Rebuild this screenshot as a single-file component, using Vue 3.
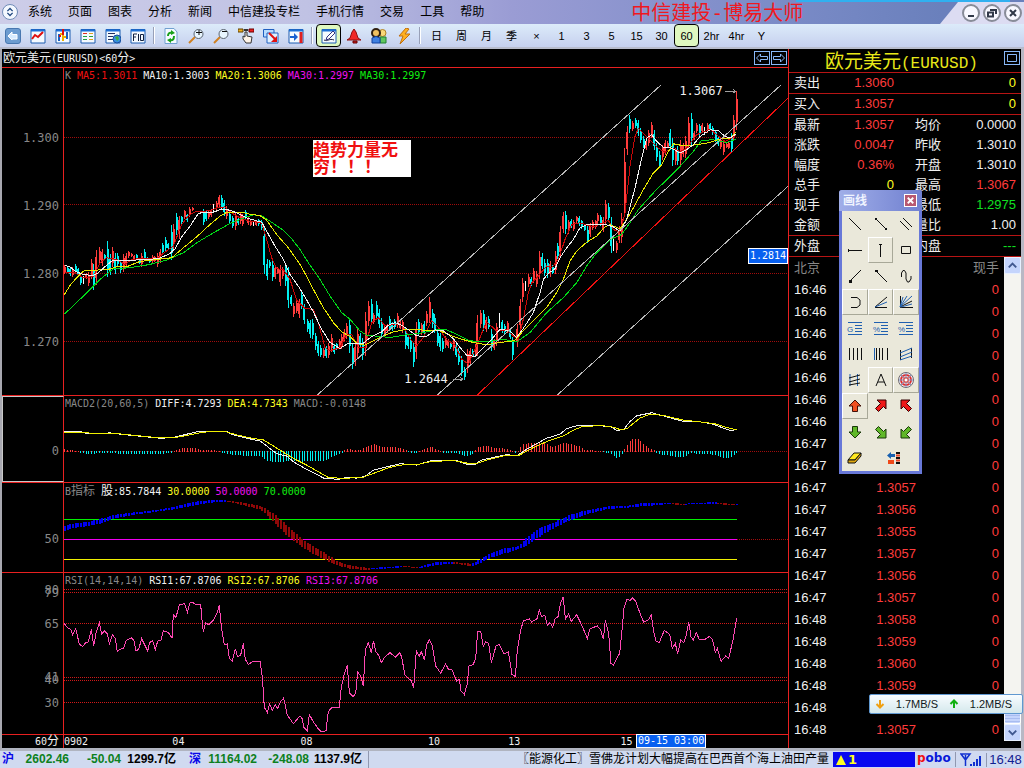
<script setup>
const menus = ['系统', '页面', '图表', '分析', '新闻', '中信建投专栏', '手机行情', '交易', '工具', '帮助']

// Shapes are [path, stroke, fill, stroke width]
const K = '#101010'
const B = '#2060b0'
const N = 'none'
const win = [['M1 1.500H15V15H1Z', '#1c5cb0', '#f4faff', 1], ['M1 2.500H15', '#1c70d8', N, 2]]
const tools = [
  [
    { n: '后退', s: [['M3 .5H13Q15.500 .5 15.500 3V13Q15.500 15.500 13 15.500H3Q.5 15.500 .5 13V3Q.5 .5 3 .5Z', '#4878b0', '#6c9cd0', 1], ['M3 8L7 4V6.500H12V11H7V12Z', '#fff', '#d8ecff', 1]] },
    { n: '分时', s: [...win, ['M2 11L5 7L8 9L13 4', '#e01010', N, 2]] },
    { n: 'K线', s: [...win, ['M4 6V13M12 4V11', '#1c60c0', N, 2], ['M8 1V7M4 8H6', '#e01010', N, 2], ['M8 7V13M10 8V10M6 5V7', '#f0b000', N, 2]] },
    { n: '报价', s: [...win, ['M3 5.500H7', '#e03020', N, 1], ['M3 8.500H7M3 11.500H7', '#20a040', N, 1], ['M9 5.500H13M9 11.500H13', '#e0a020', N, 1], ['M9 8.500H13', '#20a040', N, 1]] },
    { n: '资讯', s: [...win, ['M3 5.500H10M3 8.500H8M3 11.500H8', '#203060', N, 1], ['M8 11A4 4 0 1 1 16 11A4 4 0 1 1 8 11Z', '#1850a0', '#3890e0', 1], ['M10 9L13 8L14 11L12 13Z', N, '#40b040', 0]] },
    { n: 'F10', s: [...win, ['M3.500 13V6H7M3.500 9H6M8.500 13V6M10.500 6.500H13.500V12.500H10.500Z', '#102040', N, 1]] },
  ],
  [
    { n: '刷新', s: [['M2 .5H11L14 4V15.500H2Z', '#70a0d0', '#f4faff', 1], ['M5 8Q5 4 9 5M11 8Q11 13 7 12', '#18a018', N, 2], ['M8 2L12 5L8 7ZM8 10L4 12L8 15Z', N, '#18a018', 0]] },
    { n: '放大', s: [['M1 15L7 9', '#d08020', N, 2], ['M6 6A4.500 4.500 0 1 1 15 6A4.500 4.500 0 1 1 6 6Z', '#5a6470', '#e8f6ff', 1], ['M8 4.500H14M11 2V7', K, N, 1]] },
    { n: '缩小', s: [['M1 15L7 9', '#d08020', N, 2], ['M6 6A4.500 4.500 0 1 1 15 6A4.500 4.500 0 1 1 6 6Z', '#5a6470', '#e8f6ff', 1], ['M9 3.500H14', K, N, 1]] },
    { n: '移动', s: [['M0 1H5V4H0Z', '#604000', '#f0b020', 1], ['M11 1H16V4H11Z', '#600', '#f02020', 1], ['M6 2H10', '#333', N, 2], ['M7 4V9L5 8V11L8 15H13L14 9L9 8V4Z', '#333', '#fff4e8', 1]] },
    { n: '叠加', s: [['M.5 1.500H11V9H.5Z', '#2060c0', '#b8dcff', 1], ['M4 5H15V15H4Z', '#2060c0', '#e0f0ff', 1], ['M6 5L13 12', '#e01010', N, 2], ['M14 8V14H8Z', N, '#e01010', 0]] },
    { n: '区间', s: [...win, ['M2 9H8', '#1860d0', N, 2], ['M6 5L10 9L6 13Z', N, '#1860d0', 0], ['M13 4V15', '#e02020', N, 3]] },
  ],
  [
    { n: '画线', on: true, s: [...win, ['M3 12C7 14 8 10 13 12', '#202040', N, 1], ['M5 12L6 9L12 3L14 5L8 11Z', '#303080', '#fff', 1]] },
    { n: '预警', s: [['M8 1L10 4L12 10L15 12H1L4 10L6 4Z', '#901010', '#f02828', 1], ['M7 13H11V15H7Z', '#600', '#d02020', 1]] },
    { n: '用户', s: [['M8 5A3.500 3.500 0 1 1 15 5A3.500 3.500 0 1 1 8 5Z', '#b08020', '#f8d878', 1], ['M9 9H15V15H9Z', '#208030', '#60c860', 1], ['M1 5A3.500 3.500 0 1 1 9 5A3.500 3.500 0 1 1 1 5Z', '#302010', '#f0c060', 2], ['M1 10Q5 7 9 10V15H1Z', '#1040a0', '#4080e0', 1]] },
    { n: '闪电', s: [['M10 0L3 8H7L4 16L14 6H9L13 1Z', '#c07010', '#ffb020', 1]] },
  ],
]
const periods = ['日', '周', '月', '季', '×', '1', '3', '5', '15', '30', '60', '2hr', '4hr', 'Y']

const arrowUp = 'M13 7L19 13H15.500V18.500H10.500V13H7Z'
const arrowNE = 'M9 7H18V16L15.500 13.500L10.500 18.500L7.500 15.500L12.500 10.500Z'
const arrowNW = 'M17 7H8V16L10.500 13.500L15.500 18.500L18.500 15.500L13.500 10.500Z'
const arrowDown = 'M13 19L19 13H15.500V7.500H10.500V13H7Z'
const arrowSE = 'M9 19H18V10L15.500 12.500L10.500 7.500L7.500 10.500L12.500 15.500Z'
const arrowSW = 'M17 19H8V10L10.500 12.500L15.500 7.500L18.500 10.500L13.500 15.500Z'
const ratio = [['M6 7.500H20M13 10.500H20M13 13.500H20M13 16.500H20M6 19.500H20', B, N, 1]]
const palette = [
  { n: '直线', s: [['M7 7L19 19', K, N, 1]] },
  { n: '线段', s: [['M8 8L18 18', K, N, 1], ['M7 7H9V9H7ZM17 17H19V19H17Z', N, K, 0]] },
  { n: '平行线', s: [['M7 10L16 19M10 7L19 16', K, N, 1]] },
  { n: '水平线', s: [['M6 13.500H20M6.500 12V15', K, N, 1]] },
  { n: '垂直线', up: true, s: [['M12.500 7V20M11 7.500H14', K, N, 1]] },
  { n: '矩形', s: [['M8.500 9.500H17.500V16.500H8.500Z', K, N, 1]] },
  { n: '上射线', s: [['M8 18L19 7', K, N, 1], ['M7 17H10V20H7Z', N, K, 0]] },
  { n: '下射线', s: [['M8 8L19 19', K, N, 1], ['M7 7H10V9H7Z', N, K, 0]] },
  { n: '正弦线', s: [['M8.500 14V10L10 7.500H11.500L13 10V16L14.500 19H16L18 16V13', K, N, 1]] },
  { n: '弧线', up: true, s: [['M9 8.500H15L18 11V16L15 18.500H9', K, N, 1]] },
  { n: '角度线', up: true, s: [['M7 18.500H19M7 18L19 8', K, N, 1], ['M7 18L19 13', B, N, 1]] },
  { n: '扇形线', up: true, s: [['M7.500 7V18.500H20M7 18L19 12', K, N, 1], ['M7 18L10 8M7 18L14 7M7 18L19 7M8 18L19 15', B, N, 1]] },
  { n: '黄金分割', t: 'G', s: ratio },
  { n: '百分比线', t: '%', s: ratio },
  { n: '波段线', t: '%', s: ratio },
  { n: '周期线', s: [['M7.500 7V19M11.500 7V19M15.500 7V19M19.500 7V19', K, N, 1]] },
  { n: '时间线', s: [['M6.500 7V19', B, N, 1], ['M8.500 7V19M11.500 7V19M14.500 7V19M19.500 7V19', K, N, 1]] },
  { n: '通道线', s: [['M7.500 9V19M18.500 7V17', K, N, 1], ['M7 12L19 7M7 16L19 11M7 19L19 15', B, N, 1]] },
  { n: '回归线', s: [['M8 7V19M15.500 7V19', B, N, 1], ['M7 11L18 8M7 15L18 12M7 18L18 16', K, N, 1]] },
  { n: '文字', up: true, s: [['M8 19L13 7L18 19M10 15H16', K, N, 1]] },
  { n: '轮盘', up: true, s: [['M5.500 13A7.500 7.500 0 1 1 20.500 13A7.500 7.500 0 1 1 5.500 13Z', '#706870', '#e8f0f8', 1], ['M8 13A5 5 0 1 1 18 13A5 5 0 1 1 8 13Z', '#e03030', '#f8dede', 2], ['M6 13H20M13 6V20M8 8L18 18M18 8L8 18', '#8098c8', N, 1], ['M11 11H15V15H11Z', '#c02020', '#fff', 1]] },
  { n: '红箭头', up: true, s: [[arrowUp, '#401008', '#f05020', 1]] },
  { n: '右上箭头', s: [[arrowNE, '#300', '#f01818', 1]] },
  { n: '左上箭头', s: [[arrowNW, '#300', '#f01818', 1]] },
  { n: '绿箭头', s: [[arrowDown, '#183808', '#60b828', 1]] },
  { n: '右下箭头', s: [[arrowSE, '#183808', '#60b828', 1]] },
  { n: '左下箭头', s: [[arrowSW, '#183808', '#60b828', 1]] },
  { n: '擦除', s: [['M6 15L12 8H19L13 15Z', K, '#ffe820', 1], ['M6 15V18H13L19 11V8L13 15Z', K, '#e0a810', 1]] },
  { n: '全部删除', wide: true, s: [['M7 10.500L11 7V9H15V12H11V14Z', N, '#1860b0', 0], ['M8 15H14V19H8Z', N, '#f04818', 0], ['M16 7H20V9H16ZM16 12H20V14H16ZM16 17H20V19H16Z', N, K, 0], ['M16 9.500H20V11.500H16ZM16 14.500H20V16.500H16Z', N, '#e84020', 0]] },
]

// Price pane: candles as colour, x, high, low; each block has its own origin
const candleBlocks = [
  [150, 540, 'r44 258 285 c52 262 282 c60 265 290 r68 262 292 c76 255 282 c84 265 290 c92 283 318 w100 290 315 r108 282 300 r116 278 320 r124 240 300 c130 255 332 r138 213 318 r148 204 250 r156 208 260 c164 225 240 c172 186 292 c180 225 288 r187 204 262 c195 222 285 c203 220 262 c212 245 280 r220 225 278 r228 222 265 r236 214 235 r244 220 232 r252 228 240 c260 225 240 c268 235 255 r275 222 262 c283 210 242 c291 232 246 c299 238 250 r307 228 250 r314 230 248 r322 220 262 r330 210 250 c338 190 225 c346 173 215 c354 190 210 c364 135 242 r371 132 210 c379 99 165 r387 108 178 c395 108 132 r403 90 118 c411 102 128 r419 83 112 r428 82 94 c460 88 137 c468 92 124 r475 92 118 r483 88 112 w491 72 96 r499 63 92 r507 45 82 c514 45 90 c522 60 108 r530 80 118 c538 98 132 c547 108 146 r556 100 150 c564 115 135 r571 98 132 r578 102 140 c586 90 120 r594 112 135 r602 120 140 w610 125 138 r618 122 140 c626 118 138 c634 122 150 c642 140 285 c651 240 303 c659 243 265 c667 246 305 r675 258 300 r683 262 284 r690 258 320 r698 262 298 c706 250 320 c714 262 386 c723 346 380 r731 370 414 r739 362 402 r747 358 416'],
  [840, 840, 'c65 38 88 c72 75 135 c82 118 158 c90 122 175 c98 120 178 c106 160 212 c114 185 230 c122 198 235 r130 205 238 c138 200 238 r146 190 236 r154 165 218 c162 195 225 c170 190 212 r178 180 210 r184 165 208 r192 150 186 r200 130 180 c208 115 222 c217 190 270 r225 190 260 r232 145 240 c240 160 205 c248 175 242 r256 98 232 r265 66 140 c274 60 135 r281 100 135 c289 66 120 c297 90 145 c305 115 175 r313 140 168 r321 135 162 c329 110 155 c336 128 155 c344 118 148 r352 102 145 r360 125 150 r368 122 160 c376 145 210 c384 165 208 c392 172 220 c400 190 263 r408 128 240 c416 118 170 r424 130 168 c432 125 168 r440 95 140 r448 54 130 c457 90 145 c464 105 160 c472 150 200 c480 160 215 c488 175 220 r496 170 205 r504 180 205 c512 188 208 r520 178 215 c528 195 235 c536 205 258 c544 232 290 c553 265 302 r562 210 282 r570 205 255 c578 210 235 r586 195 235 r591 108 230 r602 92 145 c610 92 155 r618 112 158 c626 110 150 c634 150 216 r642 180 212 r650 130 200 w658 100 145 c666 122 160 c674 135 165 r682 125 162 c690 150 180 c698 172 243'],
  [1440, 240, 'r111 735 803 r120 660 755 r128 595 668 w136 605 635 r145 585 622 c153 592 620 r161 565 612 r170 575 622 r178 516 600 c186 522 570 c194 540 590 c202 540 596 r210 545 592 c218 558 585 r226 515 585 c232 490 540 r240 438 536 r249 398 460 c256 394 462 r265 420 462 c273 418 445 r281 420 455 r289 408 430 c297 410 438 c305 420 448 c313 432 455 c322 440 492 r330 430 472 r338 422 452 r346 420 448 r353 400 432 c361 405 438 r369 412 456 r377 360 432 c385 370 425 c393 412 522 w401 465 515 r409 485 520 r417 440 492 r425 400 490 r433 205 410 r441 140 225 c449 105 160 r457 122 155 c466 114 145 c474 120 170 c482 145 190 c490 170 205 r498 182 210 r506 150 200 r515 125 175 c522 150 210 c529 190 243 c539 215 266 r547 195 240 r555 180 225 r563 185 205 c570 148 212 c578 175 258 r586 205 255 c593 200 255 r601 180 255 r609 190 232 r617 170 235 r625 110 208 c634 98 195 r642 155 180 r650 128 160 c658 132 168 r666 128 160 w674 142 165 r682 130 160 c690 128 152 c698 138 165 c706 150 188 c714 170 200 r722 175 208 r731 185 225 r739 190 205 r746 185 208 c754 160 218 r761 105 180 r769 33 150'],
]
const candlePaths = { r: ['', ''], c: ['', ''], w: ['', ''] }
for (const [ox, oy, text] of candleBlocks) {
  for (const m of text.matchAll(/([rcw])(\d+) (\d+) (\d+)/g)) {
    const x = ox + +m[2]
    const hi = oy + +m[3]
    const lo = oy + +m[4]
    const pad = (lo - hi) * 0.2
    candlePaths[m[1]][0] += `M${x} ${hi}V${lo}`
    if (m[1] !== 'w') candlePaths[m[1]][1] += `M${x + 1} ${hi + pad}V${lo - pad}`
  }
}

const join = (...blocks) => 'M' + blocks.map(([ox, oy, text]) =>
  text.split(' ').map(p => { const [x, y] = p.split(','); return `${ox + +x} ${oy + +y}` }).join('L')).join('L')
const maLines = [
  { c: '#c80808', d: join([150, 540, '44,278 75,280 100,295 130,292 150,250 170,235 200,240 225,255 245,240 290,236 320,238 345,218 370,200 395,135 415,108 440,95 480,94 500,85 525,82 545,100 570,115 600,125 635,130 650,180 665,235 680,268 700,270 720,300 740,362'], [840, 840, '60,72 75,88 100,90 115,130 135,205 150,215 180,205 200,165 215,165 235,205 255,205 275,130 295,115 315,140 350,135 370,140 390,180 410,200 430,175 455,125 475,145 500,182 525,198 545,240 565,255 590,200 610,150 620,128 650,155 680,152 700,170'], [1440, 240, '115,780 130,720 145,640 155,610 175,590 200,560 215,565 235,540 255,480 275,435 300,430 340,442 365,432 385,422 400,450 420,458 435,400 450,260 465,170 475,145 495,165 515,185 535,205 555,218 575,205 600,215 620,205 650,165 690,148 710,165 735,185 755,175 769,165']) },
  { c: '#00d818', d: join([150, 540, '42,405 75,375 110,340 150,300 190,268 240,265 300,255 350,242 400,220 440,190 490,160 540,132 590,112 610,106 635,108 660,125 700,152 725,178 750,210'], [840, 840, '85,-50 120,0 150,50 185,100 210,120 240,155 260,168 300,172 330,175 370,168 420,162 470,152 500,152 530,165 570,185 620,188 670,180 708,188'], [1440, 240, '110,788 150,760 200,700 250,655 290,610 320,560 350,520 390,480 425,465 450,430 475,390 520,340 560,300 600,260 640,215 665,182 700,180 740,188 769,178']) },
  { c: '#e8e800', d: join([150, 540, '42,348 60,318 80,295 100,275 140,272 175,270 200,262 230,262 270,246 320,240 365,235 400,205 440,172 480,135 510,110 530,98 575,98 600,104 630,108 650,122 680,165 715,205 750,255'], [840, 840, '85,0 100,30 130,85 160,130 185,158 210,172 230,192 255,198 280,185 305,172 340,158 380,150 440,153 480,155 510,168 545,180 580,190 620,197 660,190 700,185'], [1440, 240, '105,782 130,755 160,725 200,685 230,640 250,600 270,545 290,515 320,488 350,470 375,442 390,435 420,448 440,420 460,385 490,330 520,280 545,255 565,215 580,192 610,198 650,195 690,188 720,178 750,175 769,155']) },
  { c: '#f0f0f0', d: join([150, 540, '44,258 60,262 75,275 100,286 130,288 145,280 165,262 185,245 210,242 250,242 300,240 330,236 360,222 375,208 395,172 420,140 445,102 460,98 490,98 515,88 540,92 560,100 590,115 620,124 635,128 650,155 675,200 700,240 720,285 750,328'], [840, 840, '80,62 100,98 125,150 150,190 180,208 205,192 250,192 275,172 305,158 325,138 345,130 365,138 390,155 410,170 440,172 465,152 490,155 520,178 540,205 560,228 585,232 610,205 635,180 660,150 690,155'], [1440, 240, '110,775 135,740 160,700 180,640 190,600 205,582 225,568 240,535 260,505 280,480 300,445 320,436 380,436 400,442 420,455 440,420 465,325 485,235 500,175 515,165 530,185 550,202 575,205 600,220 620,210 640,195 660,170 690,150 715,152 735,170 750,175 769,162']) },
]

const at = (keys, x, k) => {
  const i = Math.max(1, keys.findIndex(p => p[0] >= x))
  const a = keys[i - 1]
  const b = keys[i]
  return a[k] + (b[k] - a[k]) * (x - a[0]) / (b[0] - a[0])
}
const pairs = text => text.split(' ').map(p => p.split(',').map(Number))

const diff = join([0, 1185, '192,113 240,112 260,118 290,119 330,116 370,121 400,124 440,128 480,132 520,130 560,120 590,113 680,112 700,122 740,132 780,140 800,155 830,178 860,185 880,202 920,225 950,240 975,253 1020,254 1040,248 1070,251 1095,246 1120,227 1150,220 1200,208'], [1200, 1185, '50,212 100,197 170,199 200,210 225,210 245,197 290,187 320,181 350,184 380,165 410,148 440,132 480,120 500,103 530,95 600,95 630,97 650,108 670,107 690,82 710,65 755,56 800,68 850,82 900,83 940,90 970,102 990,108 1010,107'])
const dea = join([0, 1185, '192,115 300,117 360,119 440,127 480,131 540,128 600,116 630,112 680,113 710,122 760,133 790,137 820,155 860,180 880,192 920,212 960,235 985,249 1030,252 1090,248 1120,237 1160,222 1200,212'], [1200, 1185, '50,211 90,202 140,199 170,200 200,206 230,207 260,197 310,185 355,184 400,160 440,142 490,125 520,108 550,96 610,95 640,99 660,106 680,104 720,72 750,60 790,64 850,78 900,83 945,89 980,100 1010,107'])
const histKeys = pairs('192,5 230,1 260,-5 290,-3 330,-2 370,-5 420,-4 480,-5 510,-2 530,2 545,10 580,10 600,4 640,2 670,-1 690,-6 730,-10 780,-10 800,-25 830,-30 870,-26 900,-28 940,-26 970,-27 1000,-12 1020,-4 1040,5 1080,3 1100,12 1120,21 1150,12 1200,10 1215,3 1240,-4 1270,4 1295,14 1310,4 1330,-1 1370,-3 1400,-12 1420,-3 1435,12 1460,16 1480,8 1510,8 1530,3 1550,-4 1570,20 1590,25 1630,25 1660,12 1690,25 1740,14 1755,2 1800,1 1830,-3 1850,-18 1865,-8 1880,15 1895,36 1915,36 1940,12 1965,2 1980,-6 2000,-8 2030,-15 2050,-14 2070,-3 2130,-5 2170,-16 2190,-16 2212,-1')
let histUp = ''
let histDown = ''
for (let x = 194; x <= 2210; x += 8) {
  const h = at(histKeys, x, 1)
  if (h > 0) histUp += `M${x} 1359V${1355 - h}`
  else histDown += `M${x} 1356V${1359 - h}`
}

const bandKeys = pairs('192,392,407,0 220,384,397,0 260,380,392,0 300,370,384,0 340,360,370,0 400,352,359,0 460,346,351,0 520,335,343,0 570,322,333,0 600,318,327,0 650,314,321,0 677,317,320,0 690,318,322,1 740,325,334,1 780,334,344,1 800,344,362,1 830,365,392,1 860,392,422,1 900,428,452,1 940,455,477,1 980,478,497,1 1010,497,510,1 1050,511,521,1 1106,519,524,1 1110,519,522,0 1150,515,520,0 1205,512,516,0 1220,513,516,1 1255,515,519,1 1280,507,514,0 1300,501,510,0 1355,499,505,0 1375,502,507,1 1412,505,513,1 1420,503,510,0 1440,490,502,0 1470,474,487,0 1510,458,475,0 1550,455,462,0 1570,434,455,0 1610,402,428,0 1650,385,403,0 1700,362,378,0 1750,347,360,0 1820,334,342,0 1870,334,339,0 1920,325,334,0 2010,324,327,0 2025,325,330,1 2055,326,329,1 2065,325,328,0 2145,321,326,0 2155,324,328,1 2200,327,330,1 2214,327,330,0')
const bandPaths = ['', '']
for (let x = 192; x <= 2208; x += 8) {
  const top = 1185 + Math.round(at(bandKeys, x, 1))
  const h = Math.max(3, 1185 + Math.round(at(bandKeys, x, 2)) - top)
  const kind = bandKeys[Math.max(1, bandKeys.findIndex(p => p[0] >= x))][3]
  bandPaths[kind] += `M${x} ${top}h6v${h}h-6z`
}

const rsi = join([0, 1710, '192,160 203,173 212,178 218,194 227,176 238,222 248,230 257,218 265,216 274,178 281,228 288,190 298,158 305,192 314,182 322,192 328,222 337,194 346,205 352,245 360,238 371,235 378,212 394,203 402,212 408,243 416,238 425,206 443,243 449,218 458,212 466,240 473,213 483,210 490,182 505,188 516,204 520,134 528,142 538,104 554,101 562,127 570,98 578,97 586,103 602,103 606,150 610,185 617,158 626,164 640,150 650,132 658,106 664,170 673,225 682,222 688,265 697,273 706,236 712,260 722,255 730,220 736,268 745,283 760,274 780,274 787,320 793,412 802,428 809,402 817,422 826,404 833,416 842,394 851,384 862,435 880,461 900,438 906,445 912,472 922,482 928,434 940,455 953,474 964,485 978,482 985,425 994,414 1018,412 1024,350 1034,308 1042,286 1048,368 1059,380 1067,370 1073,306 1082,318 1090,348 1096,240 1105,218 1114,248 1120,212 1128,245 1137,258 1144,278 1153,262 1170,248 1186,261 1200,248'], [1200, 1710, '5,262 15,315 25,325 34,332 41,354 49,242 58,258 64,245 73,270 80,225 88,210 97,228 107,288 122,309 137,282 145,297 155,297 170,333 178,328 183,362 193,374 202,340 207,288 220,283 227,265 233,185 242,183 250,230 257,215 266,220 274,278 288,228 297,223 312,252 325,245 336,313 346,320 352,240 362,180 370,153 388,147 395,156 411,146 418,119 425,140 434,135 442,166 450,158 458,171 466,145 474,140 482,98 490,80 494,130 497,146 506,132 514,154 530,134 545,165 562,205 570,176 592,168 602,180 610,208 616,150 626,190 633,280 640,286 650,265 659,250 667,170 672,115 681,87 690,92 698,84 707,93 720,130 731,156 745,150 754,135 761,185 768,214 778,217 793,181 809,193 817,235 826,220 833,252 842,210 851,218 859,195 866,156 873,200 880,210 889,188 898,208 915,208 928,199 938,210 946,248 952,235 963,274 977,258 986,266 1000,205 1010,143'])

const priceAxis = [['1.300', 21.4], ['1.290', 42.1], ['1.280', 63], ['1.270', 83.7]]
const rsiAxis = [['80', 10.5], ['79', 12.5], ['65', 31.5], ['41', 64.5], ['40', 66.5], ['30', 80.5]]
const days = [['04', 15.8], ['08', 33.5], ['10', 51.1], ['13', 62.2], ['15', 77.7]]

const quotes = [
  ['卖出', '1.3060', 'red', '', '0', 'yellow', 'line'],
  ['买入', '1.3057', 'red', '', '0', 'yellow', 'line'],
  ['最新', '1.3057', 'red', '均价', '0.0000', ''],
  ['涨跌', '0.0047', 'red', '昨收', '1.3010', ''],
  ['幅度', '0.36%', 'red', '开盘', '1.3010', ''],
  ['总手', '0', 'yellow', '最高', '1.3067', 'red'],
  ['现手', '', '', '最低', '1.2975', 'green'],
  ['金额', '', '', '量比', '1.00', '', 'line'],
  ['外盘', '', '', '内盘', '---', 'green', 'line'],
]
const prices = ['', '', '', '', '', '', '', '', '', '1.3057', '1.3056', '1.3055', '1.3057', '1.3056', '1.3057', '1.3058', '1.3059', '1.3060', '1.3059', '', '1.3057']
const ticks = prices.map((p, i) => [i < 7 ? '16:46' : i < 15 ? '16:47' : '16:48', p, i === 19 ? '' : '0'])
</script>

<template>
  <div class="app">
    <header class="titlebar">
      <button class="orb" aria-label="系统菜单">
        <svg viewBox="0 0 16 16"><path d="M5 7L8 4L11 7M5 9L8 12L11 9" fill="none" stroke="#204880" stroke-width="1.500" /></svg>
      </button>
      <nav class="menus"><button v-for="m in menus" :key="m">{{ m }}</button></nav>
      <h1>中信建投<span>-</span>博易大师</h1>
      <div class="hot"></div>
      <div class="winbtns">
        <button aria-label="最小化"><svg viewBox="0 0 14 14"><path d="M4 10H10" /></svg></button>
        <button aria-label="还原"><svg viewBox="0 0 14 14"><path d="M5 4H11V8M3 6.500H8V10.500H3Z" /></svg></button>
        <button aria-label="关闭"><svg viewBox="0 0 14 14"><path d="M4 4L10 10M10 4L4 10" /></svg></button>
      </div>
    </header>

    <div class="toolbar">
      <template v-for="(group, g) in tools" :key="g">
        <button v-for="t in group" :key="t.n" :aria-label="t.n" :class="{ on: t.on }">
          <svg viewBox="0 0 16 16" width="16" height="16">
            <path v-for="(s, i) in t.s" :key="i" :d="s[0]" :stroke="s[1]" :fill="s[2]" :stroke-width="s[3]" />
          </svg>
        </button>
        <i class="sep"></i>
      </template>
      <button v-for="p in periods" :key="p" :class="{ on: p === '60' }">{{ p }}</button>
    </div>

    <main class="work">
      <section class="charts">
        <div class="pane-title">
          <span><span class="cjk">欧元美元</span>(EURUSD)&lt;60<span class="cjk">分</span>&gt;</span>
          <div class="nav">
            <button aria-label="上一个"><svg viewBox="0 0 14 12"><path d="M1.500 6L5.500 2V4.500H12.500V7.500H5.500V10Z" /></svg></button>
            <button aria-label="下一个"><svg viewBox="0 0 14 12"><path d="M12.500 6L8.500 2V4.500H1.500V7.500H8.500V10Z" /></svg></button>
          </div>
        </div>

        <div class="pane price">
          <div class="axis"><span v-for="a in priceAxis" :key="a[0]" :style="{ top: a[1] + '%' }">{{ a[0] }}</span></div>
          <div class="plot">
            <svg viewBox="192 204 2172 984" preserveAspectRatio="none">
              <path class="grid" d="M192 412H2364M192 616H2364M192 823H2364M192 1027H2364" />
              <template v-for="(p, k) in candlePaths" :key="k">
                <path :d="p[0]" :class="'wick ' + k" />
                <path :d="p[1]" :class="'body ' + k" />
              </template>
              <path v-for="l in maLines" :key="l.c" :d="l.d" :stroke="l.c" />
              <path stroke="#b8b8b8" d="M952 1188L1982 256M1312 1188L2342 256M1672 1188L2364 560" />
              <path stroke="#f01010" d="M1432 1188L2364 295" />
              <path stroke="#a0a0a0" d="M2175 274H2206M2200 268L2206 274L2200 280M1358 1140H1388M1380 1134L1388 1140L1380 1146" />
            </svg>
            <p class="legend"><span class="grey">K</span> <span class="r">MA5:1.3011</span> <span>MA10:1.3003</span> <span class="yellow">MA20:1.3006</span> <span class="pink">MA30:1.2997</span> <span class="lime">MA30:1.2997</span></p>
            <p class="note">趋势力量无穷！！！</p>
            <span class="mark high">1.3067</span>
            <span class="mark low">1.2644</span>
            <span class="tag">1.2814</span>
          </div>
        </div>

        <div class="pane macd">
          <div class="axis picked"><span class="zero">0</span></div>
          <div class="plot">
            <svg viewBox="192 1191 2172 255" preserveAspectRatio="none">
              <path class="grid" d="M192 1357H2364" />
              <path class="wick r" :d="histUp" />
              <path class="wick c" :d="histDown" />
              <path stroke="#f0f0f0" :d="diff" />
              <path stroke="#f0f000" :d="dea" />
            </svg>
            <p class="legend"><span class="grey">MACD2(20,60,5)</span> <span>DIFF:4.7293</span> <span class="yellow">DEA:4.7343</span> <span class="grey">MACD:-0.0148</span></p>
          </div>
        </div>

        <div class="pane bind">
          <div class="axis"><span class="fifty">50</span></div>
          <div class="plot">
            <svg viewBox="192 1449 2172 267" preserveAspectRatio="none">
              <path class="grid" d="M2211 1618H2364" />
              <path stroke="#00f000" d="M192 1558H2211" />
              <path stroke="#f000f0" d="M192 1618H2211" />
              <path stroke="#f0f000" d="M192 1678H2211" />
              <path class="solid" fill="#0000f0" :d="bandPaths[0]" />
              <path class="solid" fill="#900808" :d="bandPaths[1]" />
            </svg>
            <p class="legend"><span class="grey">B<span class="cjk">指标</span></span> <span><span class="cjk">股</span>:85.7844</span> <span class="yellow">30.0000</span> <span class="pink">50.0000</span> <span class="lime">70.0000</span></p>
          </div>
        </div>

        <div class="pane rsi">
          <div class="axis"><span v-for="a in rsiAxis" :key="a[0]" :style="{ top: a[1] + '%' }">{{ a[0] }}</span></div>
          <div class="plot">
            <svg viewBox="192 1719 2172 483" preserveAspectRatio="none">
              <path class="grid bright" d="M192 1768H2364M192 1777H2364M192 1870H2364M192 2032H2364M192 2041H2364M192 2107H2364" />
              <path stroke="#ff48b4" :d="rsi" />
            </svg>
            <p class="legend"><span class="grey">RSI(14,14,14)</span> <span>RSI1:67.8706</span> <span class="yellow">RSI2:67.8706</span> <span class="pink">RSI3:67.8706</span></p>
          </div>
        </div>

        <div class="pane time">
          <div class="axis unit">60<span class="cjk">分</span></div>
          <div class="plot scale">
            <span class="first">0902</span>
            <span v-for="d in days" :key="d[0]" class="day" :style="{ left: d[1] + '%' }">{{ d[0] }}</span>
            <span class="tag now">09-15 03:00</span>
          </div>
        </div>
      </section>

      <aside class="side">
        <h2><span class="name">欧元美元<span>(EURUSD)</span></span><button aria-label="窗口"><svg viewBox="0 0 14 12"><path d="M2.500 2.500H11.500V9.500H2.500Z" /></svg></button></h2>
        <div class="quotes">
          <div v-for="q in quotes" :key="q[0]" class="quote" :class="q[6]">
            <span>{{ q[0] }}</span><b :class="q[2]">{{ q[1] }}</b><span>{{ q[3] }}</span><b :class="q[5]">{{ q[4] }}</b>
          </div>
        </div>
        <div class="tape">
          <table>
            <thead><tr><th class="when">北京</th><th class="deal"></th><th>现手</th></tr></thead>
            <tbody><tr v-for="(t, i) in ticks" :key="i"><td>{{ t[0] }}</td><td>{{ t[1] }}</td><td>{{ t[2] }}</td></tr></tbody>
          </table>
          <div class="scroll">
            <button aria-label="向上"><svg viewBox="0 0 16 16"><path d="M4 10L8 6L12 10" /></svg></button>
            <div class="track"><div class="thumb"></div></div>
            <button aria-label="向下"><svg viewBox="0 0 16 16"><path d="M4 6L8 10L12 6" /></svg></button>
          </div>
        </div>

        <div class="palette">
          <div class="palhead"><strong>画线</strong><button aria-label="关闭画线"><svg viewBox="0 0 12 12"><path d="M3 3L9 9M9 3L3 9" /></svg></button></div>
          <div class="palgrid">
            <button v-for="p in palette" :key="p.n" :aria-label="p.n" :class="{ up: p.up, wide: p.wide }">
              <svg viewBox="0 0 26 26" width="26" height="26">
                <path v-for="(s, i) in p.s" :key="i" :d="s[0]" :stroke="s[1]" :fill="s[2]" :stroke-width="s[3]" />
                <text v-if="p.t" x="5" y="17">{{ p.t }}</text>
              </svg>
            </button>
          </div>
        </div>

        <div class="net">
          <svg viewBox="0 0 10 10"><path d="M5 1V8M1.500 5L5 8.500L8.500 5" stroke="#f0a010" /></svg><span>1.7MB/S</span>
          <svg viewBox="0 0 10 10"><path d="M5 9V2M1.500 5L5 1.500L8.500 5" stroke="#10b010" /></svg><span>1.2MB/S</span>
        </div>
      </aside>
    </main>

    <footer class="status">
      <div class="index"><i>沪</i><b class="g one">2602.46</b><b class="g two">-50.04</b><b class="amt">1299.7亿</b></div>
      <div class="index last"><i>深</i><b class="g one">11164.02</b><b class="g two">-248.08</b><b class="amt">1137.9亿</b></div>
      <p class="news">〖能源化工〗雪佛龙计划大幅提高在巴西首个海上油田产量</p>
      <div class="alert"><svg viewBox="0 0 10 10"><path d="M5 0L10 10H0Z" fill="#ffff20" /></svg>1</div>
      <div class="brand"><span>p</span>obo</div>
      <div class="signal"><svg viewBox="0 0 22 14"><path d="M1 1H10L5.500 7ZM5.500 2V13" fill="none" stroke="#1030d0" stroke-width="1.500" /><path d="M10 11h2v2h-2zM13 9h2v4h-2zM16 6h2v7h-2zM19 3h2v10h-2z" fill="#1030d0" /></svg></div>
      <div class="clock">16:48</div>
    </footer>
  </div>
</template>

<style>
body { background: #000; }
</style>

<style scoped>
.app { height: 100vh; display: flex; flex-direction: column; overflow: hidden; background: #000; color: #f0f0f0; font: 12px/14px "Liberation Sans", "Noto Sans CJK SC", sans-serif; }
.app * { box-sizing: border-box; }
h1, h2, p { margin: 0; font-weight: 400; }
button { padding: 0; border: 0; margin: 0; background: none; font: inherit; color: inherit; }
svg { display: block; }

.titlebar { position: relative; flex: none; height: 24px; display: flex; align-items: center; color: #000; background: linear-gradient(90deg, #cdcde8, #c0c2e4 30%, #9a9cd4 50%, #7c8cc8 75%, #6a80bc 92%); white-space: nowrap; }
.orb { width: 16px; height: 16px; margin: 0 10px 0 2px; border: 1px solid #708cb8; border-radius: 8px; background: #f4f8ff; }
.menus { display: flex; gap: 16px; }
h1 { margin-left: 147px; color: #f01820; font: 20px/24px "Noto Sans CJK SC", sans-serif; }
h1 span { font-family: "DejaVu Sans Mono", monospace; }
.hot { position: absolute; top: 0; right: 14px; width: 214px; height: 2px; background: #30b0f0; }
.winbtns { margin-left: auto; height: 22px; display: flex; gap: 3px; align-items: center; align-self: flex-end; padding: 0 2px 0 22px; background: #dcdcf2; clip-path: polygon(18px 0, 100% 0, 100% 100%, 0 100%); }
.winbtns button { width: 18px; height: 18px; border: 2px solid #888c98; border-radius: 9px; background: #f8f8ff; }
.winbtns path { fill: none; stroke: #303848; stroke-width: 2; }

.toolbar { flex: none; height: 25px; display: flex; align-items: center; border-bottom: 2px solid #b8bccc; background: linear-gradient(#dcebfa, #c6d0ee); color: #000; }
.toolbar button { width: 25px; height: 23px; display: flex; align-items: center; justify-content: center; font-size: 11px; }
.toolbar .on { border: 1px solid #000; border-radius: 4px; background: #dff8c0; }
.sep { width: 2px; height: 17px; margin: 0 3px; border-left: 1px solid #98a0b8; border-right: 1px solid #fff; }

.work { flex: 1; min-height: 0; display: flex; border-left: 2px solid #a8a8b0; border-right: 3px solid #b8b8c4; border-bottom: 3px solid #b0b4c0; }
.charts { flex: 1; min-width: 0; display: flex; flex-direction: column; border-right: 1px solid #e82020; font: 10px/12px "DejaVu Sans Mono", "Noto Sans CJK SC", monospace; }
.cjk { font-size: 12px; }
.pane-title { flex: none; height: 19px; display: flex; align-items: center; justify-content: space-between; padding-left: 1px; border-bottom: 1px solid #e82020; }
.nav { display: flex; gap: 1px; padding-right: 1px; }
.nav button, h2 button { flex: none; width: 16px; height: 14px; border: 1px solid #88b8f8; }
.nav path, h2 path { fill: none; stroke: #88b8f8; }
.pane { display: flex; min-height: 0; border-bottom: 1px solid #e82020; }
.price { flex: 329 0 0; }
.macd { flex: 86 0 0; }
.bind { flex: 90 0 0; }
.rsi { flex: 162 0 0; }
.time { flex: none; height: 13px; border: 0; }
.axis { position: relative; flex: none; width: 62px; border-right: 1px solid #e82020; color: #888; font-size: 12px; }
.axis > span { position: absolute; right: 4px; line-height: 14px; transform: translateY(-50%); }
.axis .zero { top: 65%; }
.axis .fifty { top: 63%; }
.picked { border: 1px solid #c8c8c8; border-right-color: #e82020; }
.unit { padding-right: 4px; color: #f0f0f0; font-size: 10px; text-align: right; line-height: 13px; }
.axis.unit > span { position: static; transform: none; line-height: 13px; }
.plot { position: relative; flex: 1; min-width: 0; }
.plot svg { position: absolute; inset: 0; width: 100%; height: 100%; shape-rendering: crispEdges; }
.plot path { fill: none; vector-effect: non-scaling-stroke; stroke-width: 1px; }
.plot .grid { stroke: #a00c0c; stroke-dasharray: 1 1; }
.plot .bright { stroke: #d01818; }
.plot .solid { fill: revert-layer; stroke: none; }
.plot .body { stroke-width: 2px; }
.plot .r { stroke: #ff3c3c; }
.plot .c { stroke: #00f0f0; }
.plot .w { stroke: #fff; }
.legend { position: absolute; top: 2px; left: 1px; white-space: pre; }
.bind .legend { top: 0; line-height: 16px; }
.grey { color: #888; }
.r { color: #f01010; }
.yellow { color: #ffff20; }
.pink { color: #f010f0; }
.lime { color: #10f010; }
.note { position: absolute; left: 34.4%; top: 22%; width: 98px; height: 37px; padding-right: 10px; background: #fff; color: #f01010; font: bold 17px/17px "Noto Sans CJK SC", sans-serif; word-break: break-all; line-break: anywhere; }
.mark { position: absolute; font-size: 12px; line-height: 14px; }
.high { left: 85%; top: 5%; }
.low { left: 47%; top: 93%; }
.tag { position: absolute; border: 1px solid #fff; background: #0860f0; color: #fff; }
.price .tag { right: 0; top: 55%; padding: 1px; }
.scale { font-size: 10px; line-height: 14px; }
.first { position: absolute; left: 0; }
.day { position: absolute; transform: translateX(-50%); }
.now { left: 79%; top: -1px; padding: 0 1px; line-height: 12px; }

.side { position: relative; flex: none; width: 232px; display: flex; flex-direction: column; font-size: 13px; }
h2 { flex: none; height: 24px; display: flex; justify-content: space-between; padding-right: 1px; border-bottom: 1px solid #b81414; color: #e8e818; font: 19px/22px "Noto Sans CJK SC", sans-serif; }
h2 button { margin-top: 2px; }
.name { margin-left: 36px; white-space: nowrap; }
.name span { font: 16px "Liberation Mono", monospace; }
.quote { height: 20px; display: grid; grid-template-columns: 50px 50px 51px 1fr; align-items: center; padding: 0 5px; line-height: 20px; }
.quote.line { height: 21px; border-bottom: 1px solid #b81414; }
.quote b { font-weight: 400; text-align: right; }
.quote span:nth-child(3) { padding-left: 21px; white-space: nowrap; }
.red { color: #ff3c3c; }
.green { color: #10e020; }
.tape { flex: 1; min-height: 0; display: flex; align-items: flex-start; overflow: hidden; }
table { flex: 1; border-collapse: collapse; table-layout: fixed; }
th, td { height: 22px; padding: 0 0 0 5px; font-weight: 400; text-align: left; line-height: 20px; }
th { color: #888; }
.when { width: 50px; }
.deal { width: 77px; }
td:nth-child(2) { color: #ff3c3c; text-align: right; }
td:nth-child(3), th:nth-child(3) { padding-right: 5px; text-align: right; }
td:nth-child(3) { color: #ff3c3c; }
.scroll { flex: none; width: 17px; height: 484px; display: flex; flex-direction: column; background: #f4f4f0; }
.scroll button { height: 17px; border: 1px solid #e8f0ff; border-radius: 2px; background: #c4d4fc; }
.scroll path { fill: none; stroke: #405890; stroke-width: 2; }
.track { flex: 1; display: flex; align-items: flex-end; }
.thumb { width: 17px; height: 30px; border: 1px solid #fff; border-radius: 2px; background: repeating-linear-gradient(#c4d4fc 0 2px, #a8bcf0 2px 3px); }

.palette { position: absolute; left: 50px; top: 141px; width: 83px; padding: 0 3px 3px; border-radius: 3px 3px 0 0; background: #6878d8; }
.palhead { height: 21px; display: flex; align-items: center; justify-content: space-between; background: linear-gradient(90deg, #a0aee8, #7080d0); margin: 0 -3px; padding: 0 5px 0 4px; color: #f0f4ff; font-size: 12px; border-radius: 3px 3px 0 0; }
.palhead button { width: 13px; height: 13px; border: 1px solid #fff; background: #b85870; }
.palhead path { stroke: #fff; stroke-width: 2; }
.palgrid { display: grid; grid-template-columns: repeat(3, minmax(0, 1fr)); background: #eae8da; }
.palgrid button { min-width: 0; height: 26px; display: flex; justify-content: center; border: 1px solid transparent; }
.palgrid svg { flex: none; margin-top: -1px; }
.palgrid .up { border-color: #fff #a8a898 #a8a898 #fff; }
.palgrid .wide { grid-column: span 2; }
.palgrid text { fill: #2060b0; font: 8px "Liberation Sans", sans-serif; }

.net { position: absolute; right: -2px; top: 645px; width: 154px; height: 20px; display: flex; align-items: center; border: 1px solid #6098d0; border-radius: 2px; background: linear-gradient(#f8fcff, #d4e8ec); color: #101820; font-size: 11px; }
.net svg { flex: none; width: 10px; height: 10px; margin-left: 5px; }
.net path { fill: none; stroke-width: 2; }
.net span { flex: 1; padding-right: 6px; text-align: right; }
.net span:last-child { padding-right: 10px; }

.status { flex: none; height: 17px; display: flex; align-items: center; background: #d0daf0; color: #000; line-height: 17px; white-space: nowrap; }
.index { display: flex; padding-left: 2px; }
.index i { width: 23px; color: #0808e8; font-style: normal; font-weight: 700; }
.index b { text-align: right; }
.g { color: #0c8020; }
.one { width: 44px; }
.two { width: 52px; }
.amt { width: 55px; }
.index.last { padding: 0 6px 0 13px; border-right: 1px solid #9098b0; }
.last i { width: 17px; }
.last .one { width: 51px; }
.last .amt { width: 53px; }
.news { margin-left: auto; padding-right: 4px; }
.alert { width: 82px; height: 15px; display: flex; align-items: center; gap: 2px; padding-left: 3px; background: #0808f0; color: #ffff20; font: bold 13px/15px "DejaVu Sans", sans-serif; }
.alert svg { width: 10px; height: 10px; }
.brand { width: 41px; height: 15px; padding-left: 2px; border-right: 1px solid #9098b0; color: #0818d8; font: bold 12px/13px "DejaVu Sans", sans-serif; }
.brand span { color: #f01010; }
.signal { width: 31px; padding-left: 4px; border-right: 1px solid #9098b0; }
.signal svg { width: 22px; height: 14px; }
.clock { width: 37px; color: #102090; font-size: 13px; text-align: center; }
</style>
